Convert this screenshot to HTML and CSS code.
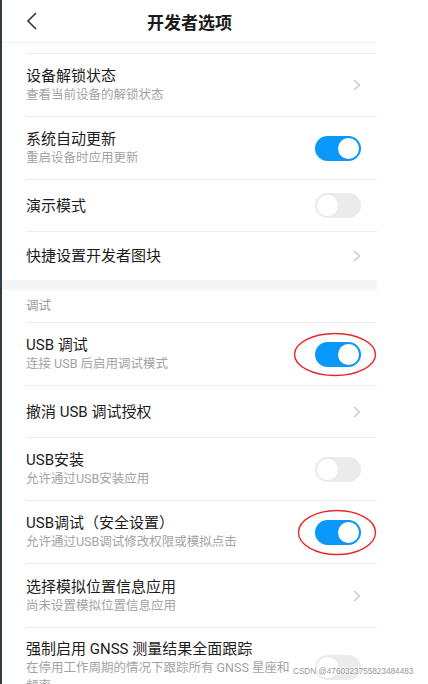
FILE: index.html
```html
<!DOCTYPE html>
<html lang="zh-CN">
<head>
    <meta charset="UTF-8">
    <meta name="viewport" content="width=device-width, initial-scale=1.0">
    <title>开发者选项</title>
    <link rel="stylesheet" href="styles.css">
</head>
<body>
<div class="screen">
    <div class="header">
        <div class="back">
            <svg width="12" height="18" viewBox="0 0 12 18"><polyline points="10,1 2,9 10,17" fill="none" stroke="#333" stroke-width="1.6"/></svg>
        </div>
        <div class="header-title">开发者选项</div>
        <div></div>
    </div>
    <div class="spacer"></div>

    <div class="item">
        <div class="text">
            <div class="title">设备解锁状态</div>
            <div class="sub">查看当前设备的解锁状态</div>
        </div>
        <svg class="arrow" width="8" height="12" viewBox="0 0 8 12"><polyline points="1,1 6.5,6 1,11" fill="none" stroke="#c4c4c4" stroke-width="1.2"/></svg>
    </div>
    <div class="item">
        <div class="text">
            <div class="title">系统自动更新</div>
            <div class="sub">重启设备时应用更新</div>
        </div>
        <div class="switch on"><span class="knob"></span></div>
    </div>
    <div class="item single">
        <div class="text">
            <div class="title">演示模式</div>
        </div>
        <div class="switch"><span class="knob"></span></div>
    </div>
    <div class="item single short">
        <div class="text">
            <div class="title">快捷设置开发者图块</div>
        </div>
        <svg class="arrow" width="8" height="12" viewBox="0 0 8 12"><polyline points="1,1 6.5,6 1,11" fill="none" stroke="#c4c4c4" stroke-width="1.2"/></svg>
    </div>

    <div class="band"></div>
    <div class="section-label">调试</div>

    <div class="item">
        <div class="text">
            <div class="title">USB 调试</div>
            <div class="sub">连接 USB 后启用调试模式</div>
        </div>
        <div class="switch on">
            <span class="knob"></span>
            <svg class="mark mark-a" width="84" height="45" viewBox="0 0 84 45"><ellipse cx="42" cy="22.5" rx="40.5" ry="21" fill="none" stroke="#e8262a" stroke-width="1.4"/></svg>
        </div>
    </div>
    <div class="item single">
        <div class="text">
            <div class="title">撤消 USB 调试授权</div>
        </div>
        <svg class="arrow" width="8" height="12" viewBox="0 0 8 12"><polyline points="1,1 6.5,6 1,11" fill="none" stroke="#c4c4c4" stroke-width="1.2"/></svg>
    </div>
    <div class="item">
        <div class="text">
            <div class="title">USB安装</div>
            <div class="sub">允许通过USB安装应用</div>
        </div>
        <div class="switch"><span class="knob"></span></div>
    </div>
    <div class="item">
        <div class="text">
            <div class="title">USB调试（安全设置）</div>
            <div class="sub">允许通过USB调试修改权限或模拟点击</div>
        </div>
        <div class="switch on">
            <span class="knob"></span>
            <svg class="mark mark-b" width="80" height="47" viewBox="0 0 80 47"><ellipse cx="40" cy="23.5" rx="38.5" ry="22" fill="none" stroke="#e8262a" stroke-width="1.4"/></svg>
        </div>
    </div>
    <div class="item wide">
        <div class="text">
            <div class="title">选择模拟位置信息应用</div>
            <div class="sub">尚未设置模拟位置信息应用</div>
        </div>
        <svg class="arrow" width="8" height="12" viewBox="0 0 8 12"><polyline points="1,1 6.5,6 1,11" fill="none" stroke="#c4c4c4" stroke-width="1.2"/></svg>
    </div>
    <div class="item tall">
        <div class="text narrow">
            <div class="title">强制启用 GNSS 测量结果全面跟踪</div>
            <div class="sub">在停用工作周期的情况下跟踪所有 GNSS 星座和频率</div>
        </div>
        <div class="switch"><span class="knob"></span></div>
    </div>
</div>
<div class="watermark">CSDN @4760323755823484483</div>
</body>
</html>
```

FILE: styles.css
```css
body {
    margin: 0;
    height: 684px;
    overflow: hidden;
    background: #fff;
    font-family: Roboto, "Noto Sans CJK SC", sans-serif;
    position: relative;
}

.screen {
    width: 377px;
    min-height: 684px;
    box-sizing: border-box;
    border-left: 2px solid #2e3f49;
    background: #fff;
}

.header {
    height: 42px;
    border-bottom: 1px solid #f0f0f0;
    display: grid;
    grid-template-columns: 1fr auto 1fr;
    align-items: center;
}

.back {
    padding-left: 24px;
    display: flex;
    align-items: center;
}

.header-title {
    font-size: 17px;
    font-weight: 600;
    color: #1a1a1a;
}

.spacer {
    height: 10px;
}

.item {
    display: flex;
    align-items: center;
    box-sizing: border-box;
    min-height: 63px;
    margin-left: 24px;
    padding-right: 16px;
    border-top: 1px solid #ededed;
}

.item.single {
    min-height: 52px;
}

.item.short {
    min-height: 49px;
}

.item.wide {
    min-height: 64px;
}

.item.tall {
    padding-top: 11px;
    padding-bottom: 4px;
}

.text {
    flex: 1;
}

.text.narrow {
    flex: none;
    width: 274px;
    margin-right: auto;
}

.title {
    font-size: 15px;
    line-height: 20px;
    color: #1c1c1c;
}

.sub {
    font-size: 12.5px;
    line-height: 18px;
    color: #a3a3a3;
}

.switch {
    position: relative;
    width: 46px;
    height: 25px;
    border-radius: 13px;
    background: #ebebeb;
    flex: none;
}

.switch .knob {
    position: absolute;
    top: 2px;
    left: 2px;
    width: 21px;
    height: 21px;
    border-radius: 50%;
    background: #fff;
}

.switch.on {
    background: #0a97fa;
}

.switch.on .knob {
    left: 23px;
}

.mark {
    position: absolute;
}

.mark-a {
    left: -22px;
    top: -10px;
}

.mark-b {
    left: -18px;
    top: -11px;
}

.band {
    height: 10px;
    background: #f5f5f5;
}

.section-label {
    height: 32px;
    line-height: 32px;
    padding-left: 24px;
    font-size: 12.5px;
    color: #9a9a9a;
}

.watermark {
    position: absolute;
    left: 293px;
    top: 667px;
    white-space: nowrap;
    font-family: "Liberation Sans", sans-serif;
    font-size: 8.2px;
    color: #999;
    text-shadow: 0 0 2px #fff, 0 0 2px #fff;
}
```
